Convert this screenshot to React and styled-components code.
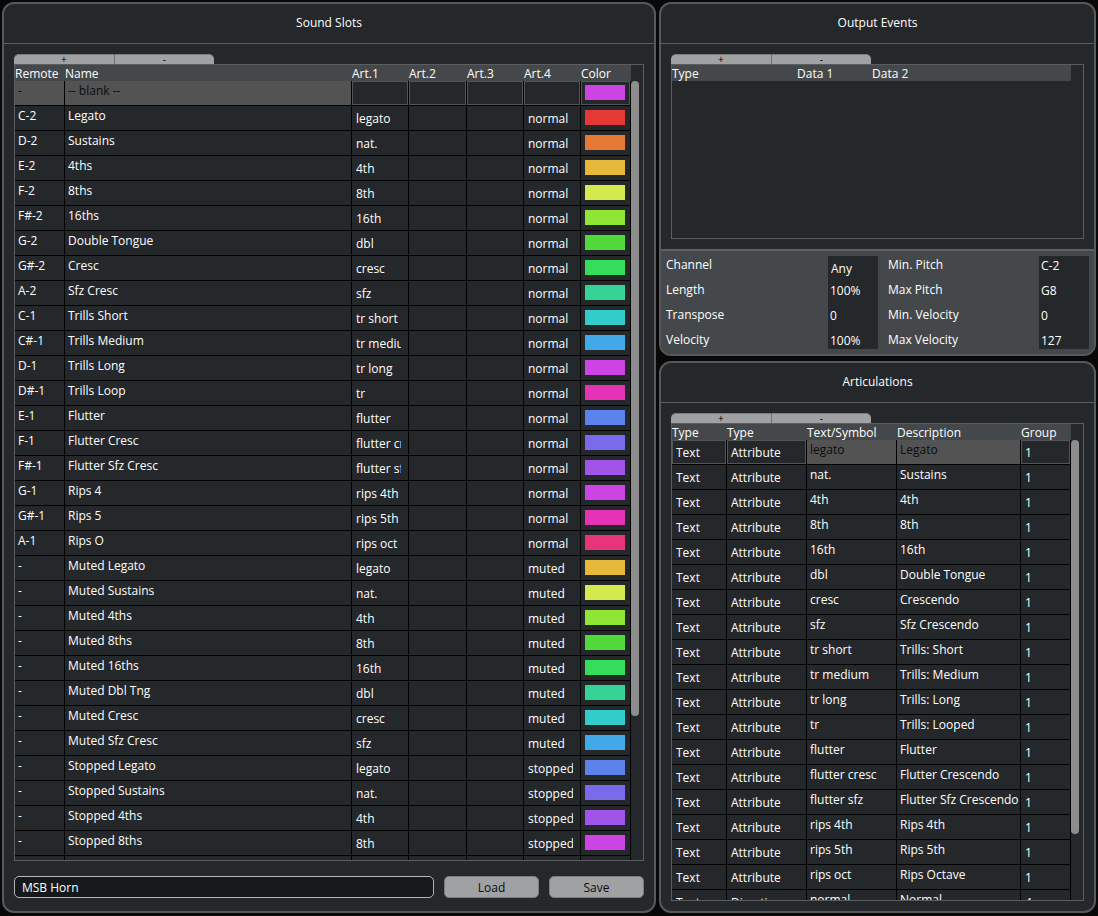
import React from "react";
import styled, { createGlobalStyle } from "styled-components";

const GlobalStyle = createGlobalStyle`
  * { box-sizing: border-box; }
  body { margin: 0; background: #080808; overflow: hidden; }
  body, button, input, select {
    font-family: "Open Sans", "Noto Sans", sans-serif;
    font-size: 12px;
    color: #fff;
  }
`;

const Page = styled.main`
  display: grid;
  grid-template-columns: minmax(0, 654fr) minmax(0, 437fr);
  gap: 3px;
  height: 100vh;
  padding: 2px 2px 3px;
`;

const Column = styled.div`
  display: flex;
  flex-direction: column;
  gap: 5px;
  min-height: 0;
`;

const Panel = styled.section`
  display: flex;
  flex-direction: column;
  flex: ${(p) => (p.$fill ? "1 1 0" : "none")};
  min-height: 0;
  overflow: hidden;
  background: #25282b;
  border: 2px solid #56585b;
  border-radius: 12px;
`;

const Title = styled.h2`
  flex: none;
  margin: 0;
  height: 40px;
  line-height: 38px;
  border-bottom: 1px solid #5b5d60;
  font-size: 12px;
  font-weight: 400;
  text-align: center;
`;

const Content = styled.div`
  display: flex;
  flex-direction: column;
  flex: 1;
  min-height: 0;
  padding: 10px;
`;

const Tabs = styled.div`
  display: flex;
  flex: none;
  width: 200px;
  height: 10px;
`;

const TabButton = styled.button`
  flex: 1;
  height: 10px;
  padding: 0;
  border: 0;
  border-top: 1px solid #7c7d7f;
  background: #a0a1a3;
  color: #000;
  font-size: 10px;
  line-height: 9px;
  &:first-child { border-top-left-radius: 5px; }
  &:last-child { border-top-right-radius: 5px; }
  & + & { border-left: 1px solid #707173; }
`;

const ListBox = styled.div`
  display: flex;
  flex: ${(p) => (p.$height ? "none" : "1 1 0")};
  height: ${(p) => (p.$height ? `${p.$height}px` : "auto")};
  min-height: 0;
  overflow: hidden;
  border: 1px solid #5b5d60;
`;

const TableArea = styled.div`
  flex: 1;
  min-width: 0;
  overflow: hidden;
`;

const Table = styled.table`
  width: 100%;
  table-layout: fixed;
  border-collapse: separate;
  border-spacing: 0;
`;

const HeadCell = styled.th`
  width: ${(p) => (p.$width ? `${p.$width}px` : "auto")};
  height: 16px;
  padding: 2px 0 0;
  background: #45484a;
  font-weight: 400;
  line-height: 14px;
  text-align: left;
  white-space: nowrap;
`;

const Cell = styled.td`
  height: 25px;
  padding: 0;
  border-right: 1px solid #000;
  border-bottom: 1px solid #000;
  vertical-align: top;
  white-space: nowrap;
  overflow: hidden;
`;

const CellText = styled.div`
  height: 24px;
  padding-left: 3px;
  line-height: 20px;
  background: ${(p) => (p.$selected ? "#535353" : "transparent")};
  color: ${(p) => (p.$selected ? "#0c0c0c" : "#fff")};
`;

const CellSelect = styled.select`
  appearance: none;
  display: block;
  width: 100%;
  height: 24px;
  margin: 0;
  padding: 0 6px 0 3px;
  border: 1px solid ${(p) => (p.$selected ? "#535456" : "transparent")};
  border-radius: 0;
  background: transparent;
`;

const SwatchFrame = styled.div`
  height: 24px;
  padding: 3px;
  border: 1px solid ${(p) => (p.$selected ? "#535456" : "transparent")};
`;

const Swatch = styled.button`
  display: block;
  width: 40px;
  height: 15px;
  padding: 0;
  border: 0;
  background: ${(p) => p.$color};
`;

const ScrollTrack = styled.div`
  flex: none;
  width: 12px;
  padding-top: 16px;
`;

const ScrollThumb = styled.div`
  width: 8px;
  height: ${(p) => p.$size};
  border-radius: 4px;
  background: #8d8d8d;
`;

const PresetBar = styled.div`
  display: grid;
  grid-template-columns: minmax(0, 1fr) 95px 95px;
  gap: 10px;
  flex: none;
  padding: 15px 0 3px;
`;

const PresetInput = styled.input`
  width: 100%;
  height: 22px;
  padding: 0 7px;
  border: 1px solid #b4b6b8;
  border-radius: 5px;
  background: #15191b;
`;

const ActionButton = styled.button`
  height: 22px;
  padding: 0;
  border: 1px solid #7c7d7f;
  border-radius: 5px;
  background: #a0a1a3;
  color: #0c0c0c;
`;

const Params = styled.div`
  display: grid;
  grid-template-columns: minmax(0, 152fr) 50px minmax(0, 141fr) 50px;
  column-gap: 10px;
  flex: none;
  padding: 5px;
  border-top: 2px solid #5f6062;
  background: #45484a;
`;

const ParamStack = styled.div`
  display: grid;
  grid-template-rows: 25px 25px 25px 18px;
  align-items: start;
  background: ${(p) => (p.$dark ? "#25282b" : "transparent")};
`;

const ParamLabel = styled.label`
  line-height: 18px;
`;

const ParamInput = styled.input`
  width: 100%;
  height: 18px;
  padding: 0 2px;
  border: 0;
  background: transparent;
`;

const ParamSelect = styled.select`
  appearance: none;
  width: 100%;
  height: 25px;
  padding: 0 3px;
  border: 0;
  background: transparent;
`;

const C = {
  magenta: "#cc44e4",
  red: "#e53935",
  orange: "#e57935",
  gold: "#e5b83a",
  yellow: "#d5e84c",
  lime: "#8ee534",
  green: "#51d93b",
  emerald: "#34dd5b",
  teal: "#35d496",
  cyan: "#33cccc",
  sky: "#42a9e9",
  pink: "#e633b5",
  blue: "#5c82ec",
  indigo: "#7a6aec",
  violet: "#a054e8",
  rose: "#e83479",
};

const slots = [
  ["-", "-- blank --", "", "", C.magenta],
  ["C-2", "Legato", "legato", "normal", C.red],
  ["D-2", "Sustains", "nat.", "normal", C.orange],
  ["E-2", "4ths", "4th", "normal", C.gold],
  ["F-2", "8ths", "8th", "normal", C.yellow],
  ["F#-2", "16ths", "16th", "normal", C.lime],
  ["G-2", "Double Tongue", "dbl", "normal", C.green],
  ["G#-2", "Cresc", "cresc", "normal", C.emerald],
  ["A-2", "Sfz Cresc", "sfz", "normal", C.teal],
  ["C-1", "Trills Short", "tr short", "normal", C.cyan],
  ["C#-1", "Trills Medium", "tr medium", "normal", C.sky],
  ["D-1", "Trills Long", "tr long", "normal", C.magenta],
  ["D#-1", "Trills Loop", "tr", "normal", C.pink],
  ["E-1", "Flutter", "flutter", "normal", C.blue],
  ["F-1", "Flutter Cresc", "flutter cresc", "normal", C.indigo],
  ["F#-1", "Flutter Sfz Cresc", "flutter sfz", "normal", C.violet],
  ["G-1", "Rips 4", "rips 4th", "normal", C.magenta],
  ["G#-1", "Rips 5", "rips 5th", "normal", C.pink],
  ["A-1", "Rips O", "rips oct", "normal", C.rose],
  ["-", "Muted Legato", "legato", "muted", C.gold],
  ["-", "Muted Sustains", "nat.", "muted", C.yellow],
  ["-", "Muted 4ths", "4th", "muted", C.lime],
  ["-", "Muted 8ths", "8th", "muted", C.green],
  ["-", "Muted 16ths", "16th", "muted", C.emerald],
  ["-", "Muted Dbl Tng", "dbl", "muted", C.teal],
  ["-", "Muted Cresc", "cresc", "muted", C.cyan],
  ["-", "Muted Sfz Cresc", "sfz", "muted", C.sky],
  ["-", "Stopped Legato", "legato", "stopped", C.blue],
  ["-", "Stopped Sustains", "nat.", "stopped", C.indigo],
  ["-", "Stopped 4ths", "4th", "stopped", C.violet],
  ["-", "Stopped 8ths", "8th", "stopped", C.magenta],
  ["", "", "", "", C.pink],
];

const articulations = [
  ["Attribute", "legato", "Legato", "1"],
  ["Attribute", "nat.", "Sustains", "1"],
  ["Attribute", "4th", "4th", "1"],
  ["Attribute", "8th", "8th", "1"],
  ["Attribute", "16th", "16th", "1"],
  ["Attribute", "dbl", "Double Tongue", "1"],
  ["Attribute", "cresc", "Crescendo", "1"],
  ["Attribute", "sfz", "Sfz Crescendo", "1"],
  ["Attribute", "tr short", "Trills: Short", "1"],
  ["Attribute", "tr medium", "Trills: Medium", "1"],
  ["Attribute", "tr long", "Trills: Long", "1"],
  ["Attribute", "tr", "Trills: Looped", "1"],
  ["Attribute", "flutter", "Flutter", "1"],
  ["Attribute", "flutter cresc", "Flutter Crescendo", "1"],
  ["Attribute", "flutter sfz", "Flutter Sfz Crescendo", "1"],
  ["Attribute", "rips 4th", "Rips 4th", "1"],
  ["Attribute", "rips 5th", "Rips 5th", "1"],
  ["Attribute", "rips oct", "Rips Octave", "1"],
  ["Direction", "normal", "Normal", "4"],
];

function AddRemove({ noun }) {
  return (
    <Tabs>
      <TabButton type="button" aria-label={`Add ${noun}`}>+</TabButton>
      <TabButton type="button" aria-label={`Remove ${noun}`}>-</TabButton>
    </Tabs>
  );
}

function List({ columns, height, thumb, children }) {
  return (
    <ListBox $height={height}>
      <TableArea>
        <Table>
          <thead>
            <tr>
              {columns.map(([name, width], i) => (
                <HeadCell key={i} $width={width} scope="col">{name}</HeadCell>
              ))}
            </tr>
          </thead>
          <tbody>{children}</tbody>
        </Table>
      </TableArea>
      <ScrollTrack>{thumb && <ScrollThumb $size={thumb} />}</ScrollTrack>
    </ListBox>
  );
}

function TextCell({ selected, children }) {
  return (
    <Cell>
      <CellText $selected={selected}>{children}</CellText>
    </Cell>
  );
}

function ChoiceCell({ label, value, selected }) {
  return (
    <Cell>
      <CellSelect aria-label={label} defaultValue={value} $selected={selected}>
        <option value={value}>{value}</option>
      </CellSelect>
    </Cell>
  );
}

function SoundSlots() {
  const columns = [
    ["Remote", 50],
    ["Name"],
    ["Art.1", 57],
    ["Art.2", 58],
    ["Art.3", 57],
    ["Art.4", 57],
    ["Color", 50],
  ];
  return (
    <Panel $fill>
      <Title>Sound Slots</Title>
      <Content>
        <AddRemove noun="sound slot" />
        <List columns={columns} thumb="81.5%">
          {slots.map(([remote, name, art1, art4, color], i) => {
            const selected = i === 0;
            return (
              <tr key={i}>
                <TextCell selected={selected}>{remote}</TextCell>
                <TextCell selected={selected}>{name}</TextCell>
                {[art1, "", "", art4].map((art, n) => (
                  <ChoiceCell key={n} label={`Articulation ${n + 1}`} value={art} selected={selected} />
                ))}
                <Cell>
                  <SwatchFrame $selected={selected}>
                    <Swatch type="button" aria-label="Slot color" $color={color} />
                  </SwatchFrame>
                </Cell>
              </tr>
            );
          })}
        </List>
        <PresetBar>
          <PresetInput aria-label="Expression map name" defaultValue="MSB Horn" />
          <ActionButton type="button">Load</ActionButton>
          <ActionButton type="button">Save</ActionButton>
        </PresetBar>
      </Content>
    </Panel>
  );
}

function ParamLabels({ items }) {
  return (
    <ParamStack>
      {items.map(([id, text]) => (
        <ParamLabel key={id} htmlFor={id}>{text}</ParamLabel>
      ))}
    </ParamStack>
  );
}

const generalParams = [
  ["channel", "Channel", "Any", true],
  ["length", "Length", "100%"],
  ["transpose", "Transpose", "0"],
  ["velocity", "Velocity", "100%"],
];

const rangeParams = [
  ["min-pitch", "Min. Pitch", "C-2"],
  ["max-pitch", "Max Pitch", "G8"],
  ["min-velocity", "Min. Velocity", "0"],
  ["max-velocity", "Max Velocity", "127"],
];

function ParamValues({ items }) {
  return (
    <ParamStack $dark>
      {items.map(([id, , value, isChoice]) =>
        isChoice ? (
          <ParamSelect key={id} id={id} defaultValue={value}>
            <option value={value}>{value}</option>
          </ParamSelect>
        ) : (
          <ParamInput key={id} id={id} defaultValue={value} />
        )
      )}
    </ParamStack>
  );
}

function OutputEvents() {
  return (
    <Panel>
      <Title>Output Events</Title>
      <Content>
        <AddRemove noun="output event" />
        <List columns={[["Type", 125], ["Data 1", 75], ["Data 2"]]} height={175} />
      </Content>
      <Params>
        <ParamLabels items={generalParams} />
        <ParamValues items={generalParams} />
        <ParamLabels items={rangeParams} />
        <ParamValues items={rangeParams} />
      </Params>
    </Panel>
  );
}

function Articulations() {
  const columns = [
    ["Type", 55],
    ["Type", 80],
    ["Text/Symbol", 90],
    ["Description"],
    ["Group", 50],
  ];
  return (
    <Panel $fill>
      <Title>Articulations</Title>
      <Content>
        <AddRemove noun="articulation" />
        <List columns={columns} thumb="85.6%">
          {articulations.map(([kind, symbol, description, group], i) => {
            const selected = i === 0;
            return (
              <tr key={i}>
                <ChoiceCell label="Display type" value="Text" selected={selected} />
                <ChoiceCell label="Articulation type" value={kind} selected={selected} />
                <TextCell selected={selected}>{symbol}</TextCell>
                <TextCell selected={selected}>{description}</TextCell>
                <ChoiceCell label="Group" value={group} selected={selected} />
              </tr>
            );
          })}
        </List>
      </Content>
    </Panel>
  );
}

export default function App() {
  return (
    <>
      <GlobalStyle />
      <Page>
        <Column>
          <SoundSlots />
        </Column>
        <Column>
          <OutputEvents />
          <Articulations />
        </Column>
      </Page>
    </>
  );
}
